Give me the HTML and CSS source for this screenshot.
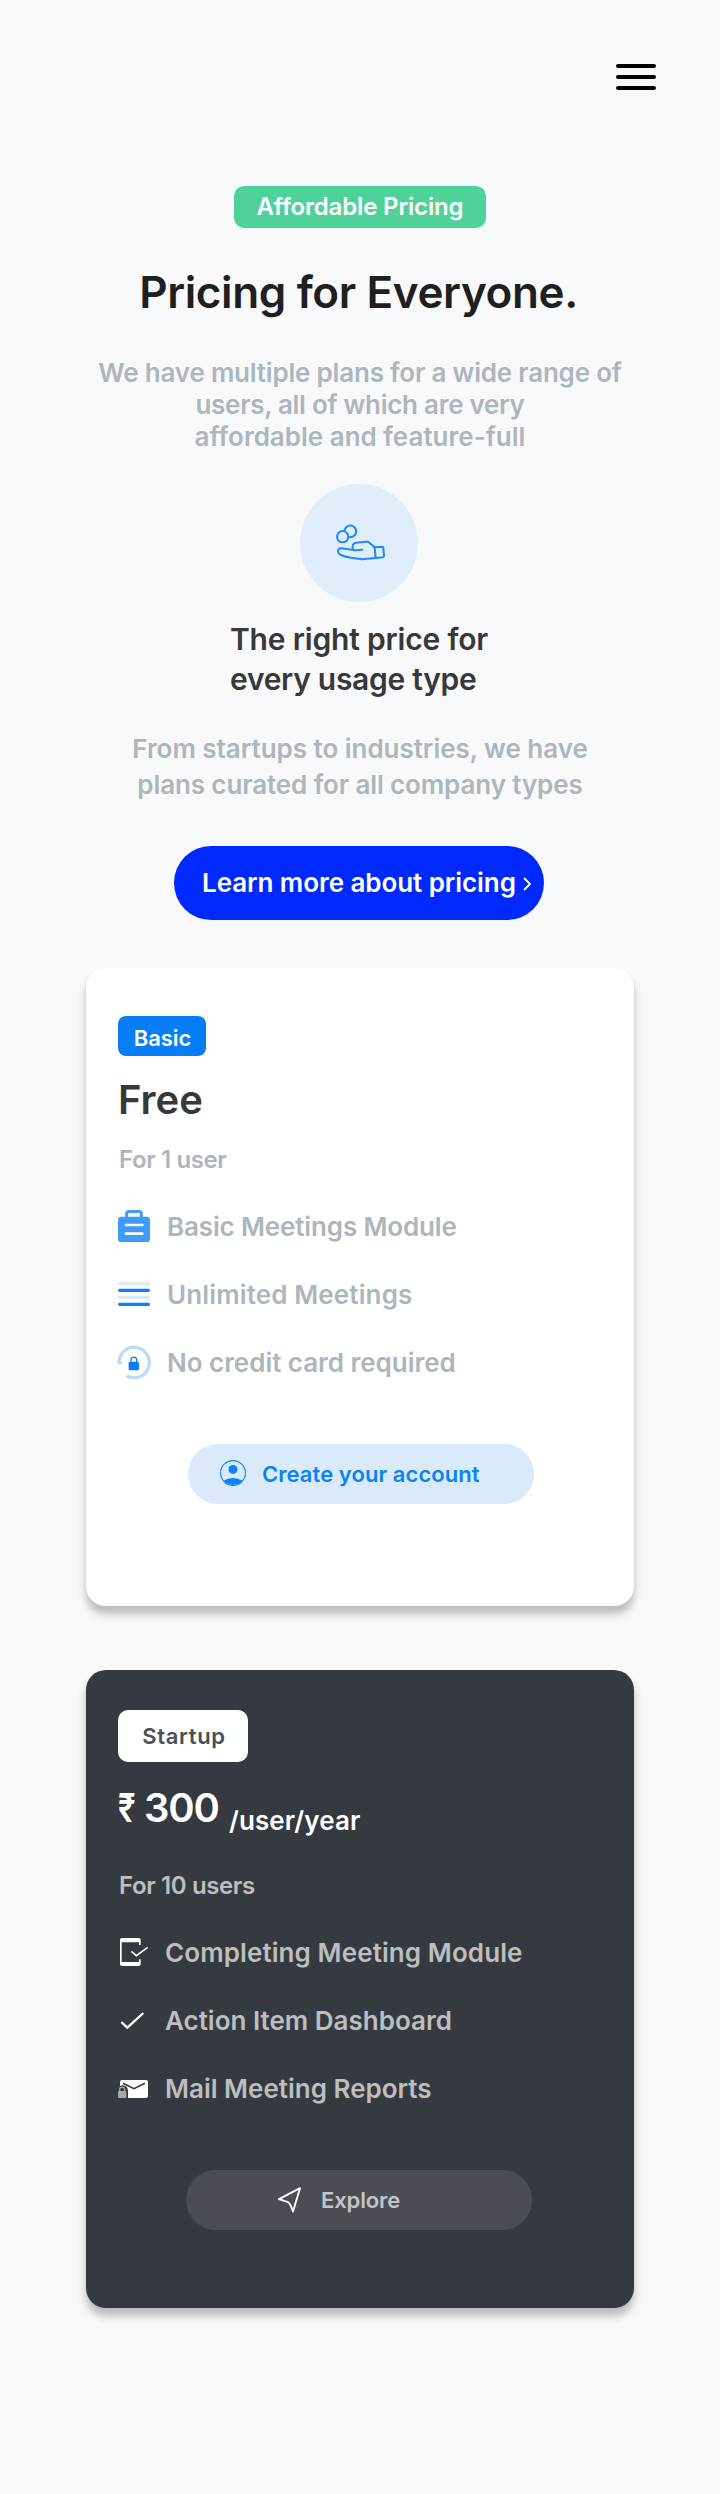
FILE: index.html
```
<!DOCTYPE html>
<html lang="en">
<head>
<meta charset="utf-8">
<title>Pricing</title>
<link rel="stylesheet" href="styles.css">
</head>
<body>
<header class="topbar">
  <button class="menu" aria-label="Menu"><span class="menu-bar"></span><span class="menu-bar"></span><span class="menu-bar"></span></button>
</header>
<main class="page">
  <section class="intro">
    <span class="badge">Affordable Pricing</span>
    <h1 class="title">Pricing for Everyone.</h1>
    <p class="lead"><span class="line line-a">We have multiple plans for a wide range of</span><span class="line line-b">users, all of which are very</span><span class="line">affordable and feature-full</span></p>
    <div class="medallion">
      <svg class="hand" viewBox="0 0 240 240" fill="none" stroke="#1e8bfa" stroke-width="6.2" stroke-linejoin="round" stroke-linecap="round">
        <circle cx="91" cy="94" r="17.5"/>
        <circle cx="68" cy="110" r="17" fill="#e0eefc"/>
        <path d="M127 149L106 151L65 145Q54 144 54 155Q55 162 62 165Q76 171 93 173L126 178L167 174"/>
        <path d="M99 149Q94 129 109 128L138 125Q144 124 149 129L164 142"/>
        <path d="M164 142L186 140Q190 140 190 144L192 167Q192 171 188 172L167 174Z"/>
      </svg>
    </div>
    <h2 class="subtitle"><span class="line sub-a">The right price for</span><span class="line sub-b">every usage type</span></h2>
    <p class="note"><span class="line">From startups to industries, we have</span><span class="line note-b">plans curated for all company types</span></p>
    <a class="cta">Learn more about pricing<svg class="chevron" viewBox="0 0 8 14" fill="none" stroke="#fff" stroke-width="1.8"><path d="M1 1L7 7L1 13"/></svg></a>
  </section>

  <article class="card card-basic">
    <span class="tag tag-basic">Basic</span>
    <h3 class="price-free">Free</h3>
    <p class="seats">For 1 user</p>
    <ul class="features">
      <li class="feature">
        <svg class="icon" viewBox="0 0 96 96"><rect x="26" y="4.5" width="44" height="30" rx="7" fill="none" stroke="#3f9bf8" stroke-width="9"/><rect y="20" width="96" height="76" rx="10" fill="#3f9bf8"/><path d="M24 45H73M24 71H73" stroke="#fff" stroke-width="8" stroke-linecap="round"/></svg>
        <span class="ls-1">Basic Meetings Module</span>
      </li>
      <li class="feature">
        <svg class="icon" viewBox="0 0 96 96"><g fill="#dbeafb"><rect y="12" width="96" height="10" rx="5"/><rect y="53" width="96" height="10" rx="5"/></g><g fill="#0a82f8"><rect y="32" width="96" height="10" rx="5"/><rect y="74" width="96" height="10" rx="5"/></g></svg>
        <span class="ls-2">Unlimited Meetings</span>
      </li>
      <li class="feature">
        <svg class="icon" viewBox="0 0 96 96"><path d="M3 48A45.5 46 0 1 1 25 89" fill="none" stroke="#bbd9fa" stroke-width="10"/><path d="M-5 47H16L6 58Z" fill="#bbd9fa"/><rect x="32" y="47" width="31" height="26" rx="5" fill="#0a7df5"/><path d="M39 48V42A8.5 8.5 0 0 1 56 42V48" fill="none" stroke="#0a7df5" stroke-width="4"/></svg>
        <span class="ls-3">No credit card required</span>
      </li>
    </ul>
    <a class="pill pill-create"><svg class="user" viewBox="0 0 26 26"><circle cx="13" cy="13" r="12.4" fill="none" stroke="#0a82f8" stroke-width="1.1"/><circle cx="13" cy="9.4" r="4.5" fill="#0a82f8"/><path d="M3.5 20.7Q7.5 18 13 18T22.5 20.7A12.8 12.8 0 0 1 3.5 20.7Z" fill="#0a82f8"/></svg>Create your account</a>
  </article>

  <article class="card card-startup">
    <span class="tag tag-startup">Startup</span>
    <div class="price"><span class="currency">₹</span><span class="amount">300</span><span class="per">/user/year</span></div>
    <p class="seats">For 10 users</p>
    <ul class="features">
      <li class="feature">
        <svg class="icon" viewBox="0 0 96 96"><path d="M12 6H62Q68 6 68 12V27H63V19H11V78H63V70H68V84Q68 90 62 90H12Q6 90 6 84V12Q6 6 12 6Z" fill="#fff"/><path d="M40 46L55 59L89 34" fill="none" stroke="#fff" stroke-width="4.5"/></svg>
        <span class="ls-4">Completing Meeting Module</span>
      </li>
      <li class="feature">
        <svg class="icon" viewBox="0 0 96 96"><path d="M10 54L28 71L76 27" fill="none" stroke="#fff" stroke-width="7"/></svg>
        <span>Action Item Dashboard</span>
      </li>
      <li class="feature">
        <svg class="icon" viewBox="0 0 96 96"><rect x="6" y="24" width="84" height="54" rx="6" fill="#fff"/><path d="M15 34L48 50L81 34" fill="none" stroke="#353940" stroke-width="5"/><path d="M0 78V60Q0 40 13 40Q30 40 30 58V79H0Z" fill="#353940"/><rect y="57" width="25" height="21" rx="3" fill="#a9a9aa"/><path d="M5 58V53A7.5 7.5 0 0 1 20 53V58" fill="none" stroke="#a9a9aa" stroke-width="4"/></svg>
        <span>Mail Meeting Reports</span>
      </li>
    </ul>
    <a class="pill pill-explore"><svg class="send" viewBox="0 0 24 26" fill="none" stroke="#fff" stroke-width="1.9" stroke-linejoin="round"><path d="M22 1.2L1 12.2L10 15.2Q12 16 15 24.5Z"/></svg>Explore</a>
  </article>
</main>
</body>
</html>
```
FILE: styles.css
```
* { box-sizing: border-box; }
body, h1, h2, h3, p, ul { margin: 0; padding: 0; font-weight: 600; }
body {
  width: 720px;
  min-height: 2494px;
  background: #f8f9fb;
  font-family: Inter, "Open Sans", sans-serif;
  color: #adb5bd;
}
ul { list-style: none; }
svg { display: block; overflow: visible; flex: none; }
.line { display: block; white-space: nowrap; }

.topbar { display: flex; justify-content: flex-end; padding: 64px 64px 0 0; }
.menu {
  display: flex; flex-direction: column; gap: 7px;
  width: 40px; padding: 0; border: 0; background: none;
}
.menu-bar { height: 4px; border-radius: 2px; background: #000; }

.page { display: flex; flex-direction: column; align-items: center; padding-top: 96px; }
.intro { display: flex; flex-direction: column; align-items: center; width: 100%; }
.badge {
  width: 252px; height: 42px; border-radius: 10px;
  background: #4fd299; color: #fff;
  font-size: 24px; line-height: 42px; letter-spacing: -.16px; text-align: center;
}
.title {
  margin-top: 40px; padding-right: 3px;
  font-size: 44px; line-height: 48px; letter-spacing: -.37px; color: #1f1f1f;
}
.lead { margin-top: 41px; font-size: 26px; line-height: 32px; text-align: center; }
.line-a { letter-spacing: -.2px; }
.line-b { letter-spacing: -.28px; }
.medallion {
  width: 118px; height: 118px; margin: 31px 2px 0 0; padding: 16px 0 0 20px;
  border-radius: 50%; background: #e0eefc;
}
.hand { width: 80px; height: 80px; }
.subtitle {
  width: 260px; margin-top: 17px;
  font-size: 30px; line-height: 40px; color: #383838;
}
.sub-a { letter-spacing: -.18px; }
.sub-b { letter-spacing: -.29px; }
.note { margin-top: 32px; font-size: 26px; line-height: 36px; letter-spacing: -.03px; text-align: center; }
.note-b { letter-spacing: -.11px; }
.cta {
  display: flex; align-items: center;
  width: 370px; height: 74px; margin: 43px 2px 0 0; padding: 0 0 1px 28px;
  border-radius: 37px; background: #0029ff; color: #fff;
  font-size: 26px; letter-spacing: -.07px; white-space: nowrap;
}
.chevron { width: 8px; height: 14px; margin: 2px 0 0 7px; }

.card {
  display: flex; flex-direction: column; align-items: flex-start;
  width: 548px; height: 638px; padding: 0 32px;
  border-radius: 20px; box-shadow: 0 8px 8px rgba(0, 0, 0, .25);
}
.card-basic { margin-top: 48px; padding-top: 48px; background: #fff; }
.card-startup { margin-top: 64px; padding-top: 40px; background: #353940; color: #bdbebf; }
.tag { font-size: 22px; text-align: center; }
.tag-basic {
  width: 88px; height: 40px; padding: 2px 0 0 1px; border-radius: 8px;
  background: #067ef7; color: #fff; line-height: 40px; letter-spacing: -.09px;
}
.tag-startup {
  width: 130px; height: 52px; padding-left: 2px; border-radius: 10px;
  background: #fff; color: #495057; line-height: 52px; letter-spacing: .64px;
}
.price-free { margin-top: 20px; font-size: 40px; line-height: 48px; color: #383838; }
.seats { padding-left: 1px; font-size: 24px; line-height: 32px; letter-spacing: -.38px; }
.card-basic .seats { margin-top: 20px; }
.price {
  display: flex; align-items: flex-start; height: 60px; margin-top: 22px;
  color: #fff; white-space: nowrap;
}
.currency { width: 26px; font-size: 40px; line-height: 48px; transform: scaleX(.78); transform-origin: left; }
.amount { width: 84px; font-size: 40px; line-height: 48px; letter-spacing: -1.2px; }
.per { margin: 21px 0 0 1px; font-size: 26px; line-height: 32px; letter-spacing: .09px; }
.card-startup .seats { margin-top: 26px; }

.features { display: flex; flex-direction: column; gap: 36px; margin-top: 34px; font-size: 26px; line-height: 34px; }
.feature { display: flex; height: 32px; gap: 17px; white-space: nowrap; }
.card-startup .feature { gap: 15px; }
.icon { width: 32px; height: 32px; }
.ls-1 { letter-spacing: -.14px; }
.ls-2 { letter-spacing: .13px; }
.ls-3 { letter-spacing: -.03px; }
.ls-4 { letter-spacing: .1px; }

.pill {
  display: flex; align-items: center;
  width: 346px; height: 60px; border-radius: 30px;
  font-size: 22px; white-space: nowrap;
}
.pill-create {
  gap: 16px; margin: 66px 0 0 70px; padding-left: 32px;
  background: #dbeafb; color: #0a82f8; letter-spacing: .06px;
}
.user { width: 26px; height: 26px; margin-top: -2px; }
.pill-explore {
  gap: 19px; margin: 66px 0 0 68px; padding-left: 92px;
  background: #4a4d54; color: #c4c5c7; letter-spacing: -.13px;
}
.send { width: 24px; height: 26px; }
a, .tag, .badge, .price, .feature { font-weight: 600; }
```
